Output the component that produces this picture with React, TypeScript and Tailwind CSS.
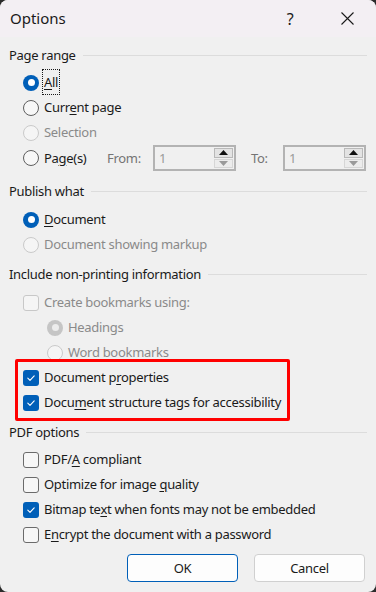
import { ReactNode } from "react"

type RadioState = "on" | "off" | "disabled" | "disabledOn"

function Radio({ state }: { state: RadioState }) {
  if (state === "on") {
    return (
      <span className="flex h-[16px] w-[16px] shrink-0 items-center justify-center rounded-full bg-[#005fb8]">
        <span className="h-[7px] w-[7px] rounded-full bg-white" />
      </span>
    )
  }
  if (state === "disabledOn") {
    return (
      <span className="flex h-[16px] w-[16px] shrink-0 items-center justify-center rounded-full bg-[#c5c5c5]">
        <span className="h-[7px] w-[7px] rounded-full bg-[#ececec]" />
      </span>
    )
  }
  return (
    <span
      className={
        state === "disabled"
          ? "h-[16px] w-[16px] shrink-0 rounded-full border border-[#cacaca] bg-[#f5f5f5]"
          : "h-[16px] w-[16px] shrink-0 rounded-full border border-[#5e5e5e] bg-[#f7f7f7]"
      }
    />
  )
}

function Check({ checked, disabled }: { checked?: boolean; disabled?: boolean }) {
  if (checked) {
    return (
      <span className="flex h-[16px] w-[16px] shrink-0 items-center justify-center rounded-[3px] bg-[#005fb8]">
        <svg width="10" height="10" viewBox="0 0 10 10" fill="none">
          <path d="M1.8 5.2 L4 7.3 L8.2 2.8" stroke="white" strokeWidth="1.1" strokeLinecap="round" strokeLinejoin="round" />
        </svg>
      </span>
    )
  }
  return (
    <span
      className={
        disabled
          ? "h-[16px] w-[16px] shrink-0 rounded-[3px] border border-[#c8c8c8] bg-[#f5f5f5]"
          : "h-[16px] w-[16px] shrink-0 rounded-[3px] border border-[#6b6b6b] bg-[#f7f7f7]"
      }
    />
  )
}

function U({ children }: { children: ReactNode }) {
  return <span className="underline decoration-1 underline-offset-2">{children}</span>
}

function Row({
  control,
  children,
  disabled,
  indent,
}: {
  control: ReactNode
  children: ReactNode
  disabled?: boolean
  indent?: boolean
}) {
  return (
    <div className={`flex h-[25px] items-center gap-[5px] ${indent ? "pl-[38px]" : "pl-[14px]"}`}>
      {control}
      <span className={disabled ? "text-[#8a8a8a]" : "text-[#1a1a1a]"}>{children}</span>
    </div>
  )
}

function Group({ title }: { title: string }) {
  return (
    <div className="flex h-[20px] items-center gap-[7px] pr-[9px]">
      <span className="text-[#1a1a1a]">{title}</span>
      <span className="h-px flex-1 bg-[#dcdcdc]" />
    </div>
  )
}

function Spin() {
  return (
    <div className="flex h-[26px] w-[83px] shrink-0 items-center border-2 border-[#b3b3b3] bg-[#f0f0f0]">
      <span className="flex-1 pl-[4px] text-[#9a9a9a]">1</span>
      <div className="flex h-full w-[20px] flex-col gap-px py-[1px] pr-[1px]">
        <span className="flex flex-1 items-center justify-center border border-[#b9b9b9] bg-[#e3e3e3]">
          <svg width="9" height="5" viewBox="0 0 9 5">
            <path d="M0 5 L4.5 0 L9 5 Z" fill="#111" />
          </svg>
        </span>
        <span className="flex flex-1 items-center justify-center border border-[#d6d6d6] bg-[#ececec]">
          <svg width="9" height="5" viewBox="0 0 9 5">
            <path d="M0 0 L9 0 L4.5 5 Z" fill="#9a9a9a" />
          </svg>
        </span>
      </div>
    </div>
  )
}

export default function App() {
  return (
    <div className="h-[592px] w-[376px] bg-[#2b2b2b] font-['Noto_Sans',sans-serif] text-[13px] leading-none tracking-[-0.3px]">
      <div className="flex h-full w-full flex-col overflow-hidden rounded-[8px] bg-[#f0f0f0]">
        <div className="flex h-[37px] shrink-0 items-center bg-[#f3eff3] pl-[10px]">
          <span className="flex-1 text-[15px] tracking-normal text-[#1a1a1a]">Options</span>
          <span className="mr-[10px] w-[40px] text-center text-[16px] text-[#1a1a1a]">?</span>
          <span className="flex w-[56px] items-center justify-center pr-[2px]">
            <svg width="13" height="13" viewBox="0 0 13 13">
              <path d="M0.5 0.5 L12.5 12.5 M12.5 0.5 L0.5 12.5" stroke="#1a1a1a" strokeWidth="1.1" />
            </svg>
          </span>
        </div>

        <div className="flex flex-col pl-[9px] pt-[8px]">
          <Group title="Page range" />
          <div className="mt-[5px] flex flex-col">
            <Row control={<Radio state="on" />}>
              <span className="-mx-[2px] border border-dotted border-[#1a1a1a] px-[1px] py-[3px]">
                <U>A</U>ll
              </span>
            </Row>
            <Row control={<Radio state="off" />}>
              Curr<U>e</U>nt page
            </Row>
            <Row control={<Radio state="disabled" />} disabled>
              Selection
            </Row>
            <div className="flex h-[26px] items-center pl-[14px]">
              <Radio state="off" />
              <span className="ml-[5px] w-[63px] shrink-0 text-[#1a1a1a]">
                Pa<U>g</U>e(s)
              </span>
              <span className="w-[46px] shrink-0 text-[#747474]">From:</span>
              <Spin />
              <span className="ml-[15px] w-[32px] shrink-0 text-[#747474]">To:</span>
              <Spin />
            </div>
          </div>

          <div className="mt-[10px]">
            <Group title="Publish what" />
          </div>
          <div className="mt-[6px] flex flex-col">
            <Row control={<Radio state="on" />}>
              <U>D</U>ocument
            </Row>
            <Row control={<Radio state="disabled" />} disabled>
              Document showing markup
            </Row>
          </div>

          <div className="mt-[7px]">
            <Group title="Include non-printing information" />
          </div>
          <div className="mt-[6px] flex flex-col">
            <Row control={<Check disabled />} disabled>
              Create bookmarks using:
            </Row>
            <Row control={<Radio state="disabledOn" />} disabled indent>
              Headings
            </Row>
            <Row control={<Radio state="disabled" />} disabled indent>
              Word bookmarks
            </Row>
            <div className="relative flex flex-col">
              <Row control={<Check checked />}>
                Document p<U>r</U>operties
              </Row>
              <Row control={<Check checked />}>
                Docu<U>m</U>ent structure tags for accessibility
              </Row>
              <div className="absolute -bottom-[6px] -top-[6px] left-[6px] w-[275px] rounded-[2px] border-[3px] border-[#ff0000]" />
            </div>
          </div>

          <div className="mt-[7px]">
            <Group title="PDF options" />
          </div>
          <div className="mt-[5px] flex flex-col">
            <Row control={<Check />}>
              PDF/<U>A</U> compliant
            </Row>
            <Row control={<Check />}>
              Optimize for image <U>q</U>uality
            </Row>
            <Row control={<Check checked />}>
              Bitmap te<U>x</U>t when fonts may not be embedded
            </Row>
            <Row control={<Check />}>
              E<U>n</U>crypt the document with a password
            </Row>
          </div>
        </div>

        <div className="mt-[7px] flex justify-end gap-[16px] pr-[11px]">
          <button className="h-[28px] w-[111px] rounded-[4px] border border-[#005fb8] bg-[#fdfdfd] text-[13px] text-[#1a1a1a]">
            OK
          </button>
          <button className="h-[28px] w-[111px] rounded-[4px] border border-[#d0d0d0] bg-[#fdfdfd] text-[13px] text-[#1a1a1a]">
            Cancel
          </button>
        </div>
      </div>
    </div>
  )
}
